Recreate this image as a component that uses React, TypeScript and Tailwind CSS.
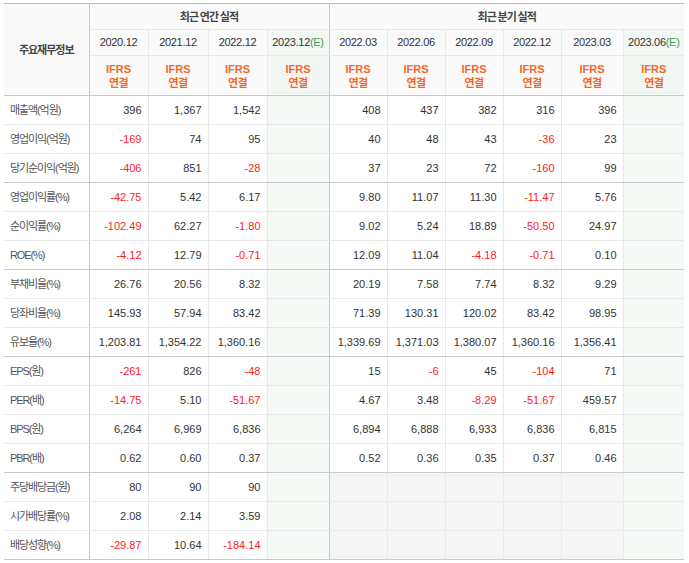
import React from "react";

const KR = "font-['Noto_Sans_CJK_KR','Liberation_Sans',sans-serif]";
const MIX = "font-['Liberation_Sans','Noto_Sans_CJK_KR',sans-serif]";
const NUM = "font-['Liberation_Sans','Noto_Sans_CJK_KR',sans-serif]";

type Row = { label: string; a: string[]; q: string[]; last?: boolean };

const rows: Row[] = [
  { label: "매출액(억원)", a: ["396", "1,367", "1,542"], q: ["408", "437", "382", "316", "396"] },
  { label: "영업이익(억원)", a: ["-169", "74", "95"], q: ["40", "48", "43", "-36", "23"] },
  { label: "당기순이익(억원)", a: ["-406", "851", "-28"], q: ["37", "23", "72", "-160", "99"], last: true },
  { label: "영업이익률(%)", a: ["-42.75", "5.42", "6.17"], q: ["9.80", "11.07", "11.30", "-11.47", "5.76"] },
  { label: "순이익률(%)", a: ["-102.49", "62.27", "-1.80"], q: ["9.02", "5.24", "18.89", "-50.50", "24.97"] },
  { label: "ROE(%)", a: ["-4.12", "12.79", "-0.71"], q: ["12.09", "11.04", "-4.18", "-0.71", "0.10"], last: true },
  { label: "부채비율(%)", a: ["26.76", "20.56", "8.32"], q: ["20.19", "7.58", "7.74", "8.32", "9.29"] },
  { label: "당좌비율(%)", a: ["145.93", "57.94", "83.42"], q: ["71.39", "130.31", "120.02", "83.42", "98.95"] },
  { label: "유보율(%)", a: ["1,203.81", "1,354.22", "1,360.16"], q: ["1,339.69", "1,371.03", "1,380.07", "1,360.16", "1,356.41"], last: true },
  { label: "EPS(원)", a: ["-261", "826", "-48"], q: ["15", "-6", "45", "-104", "71"] },
  { label: "PER(배)", a: ["-14.75", "5.10", "-51.67"], q: ["4.67", "3.48", "-8.29", "-51.67", "459.57"] },
  { label: "BPS(원)", a: ["6,264", "6,969", "6,836"], q: ["6,894", "6,888", "6,933", "6,836", "6,815"] },
  { label: "PBR(배)", a: ["0.62", "0.60", "0.37"], q: ["0.52", "0.36", "0.35", "0.37", "0.46"], last: true },
  { label: "주당배당금(원)", a: ["80", "90", "90"], q: [] },
  { label: "시가배당률(%)", a: ["2.08", "2.14", "3.59"], q: [] },
  { label: "배당성향(%)", a: ["-29.87", "10.64", "-184.14"], q: [], last: true },
];

const annualYears = ["2020.12", "2021.12", "2022.12"];
const quarterYears = ["2022.03", "2022.06", "2022.09", "2022.12", "2023.03"];

function Num({ v }: { v: string }) {
  const neg = v.startsWith("-");
  return <span className={neg ? "text-[#ff1a1a]" : "text-[#333333]"}>{v}</span>;
}

function Ifrs() {
  return (
    <div className="flex flex-col items-center text-[#f0692a] font-bold">
      <div className={`${NUM} text-[11px] leading-[13px]`}>IFRS</div>
      <div className={`${KR} text-[11px] leading-[13px] tracking-[-0.5px]`}>연결</div>
    </div>
  );
}

export default function App() {
  const bDark = "border-[#c9c9c9]";
  return (
    <div className="bg-white w-[689px] h-[563px] pt-[3px] pl-[4px]">
      <table className="border-collapse table-fixed w-[680px]">
        <colgroup>
          <col className="w-[85px]" />
          <col className="w-[59px]" />
          <col className="w-[60px]" />
          <col className="w-[59px]" />
          <col className="w-[62px]" />
          <col className="w-[58px]" />
          <col className="w-[58px]" />
          <col className="w-[58px]" />
          <col className="w-[58px]" />
          <col className="w-[62px]" />
          <col className="w-[61px]" />
        </colgroup>
        <thead>
          <tr className="h-[26px]">
            <th
              rowSpan={3}
              className={`${KR} bg-[#fafafa] border-t border-t-[#bdbdbd] border-r border-b ${bDark} text-[11px] font-bold text-[#444] tracking-[-1px] p-0`}
            >
              주요재무정보
            </th>
            <th
              colSpan={4}
              className={`${KR} bg-[#fafafa] border-t border-t-[#bdbdbd] border-r ${bDark} border-b border-b-[#e8e8e8] text-[11px] font-bold text-[#444] tracking-[-0.9px] p-0`}
            >
              최근 연간 실적
            </th>
            <th
              colSpan={6}
              className={`${KR} bg-[#fafafa] border-t border-t-[#bdbdbd] border-b border-b-[#e8e8e8] text-[11px] font-bold text-[#444] tracking-[-0.9px] p-0`}
            >
              최근 분기 실적
            </th>
          </tr>
          <tr className="h-[26px]">
            {annualYears.map((y) => (
              <th key={y} className={`${MIX} bg-[#fafafa] border-r border-b border-[#e8e8e8] text-[11px] font-normal text-[#333] tracking-[-0.3px] p-0`}>
                {y}
              </th>
            ))}
            <th className={`${MIX} bg-[#f2f7f3] border-r ${bDark} border-b border-b-[#e8e8e8] text-[11px] font-normal text-[#333] tracking-[-0.3px] p-0`}>
              2023.12<span className="text-[#3f9a5a]">(E)</span>
            </th>
            {quarterYears.map((y) => (
              <th key={y} className={`${MIX} bg-[#fafafa] border-r border-b border-[#e8e8e8] text-[11px] font-normal text-[#333] tracking-[-0.3px] p-0`}>
                {y}
              </th>
            ))}
            <th className={`${MIX} bg-[#f2f7f3] border-b border-b-[#e8e8e8] text-[11px] font-normal text-[#333] tracking-[-0.3px] p-0`}>
              2023.06<span className="text-[#3f9a5a]">(E)</span>
            </th>
          </tr>
          <tr className="h-[40px]">
            {[0, 1, 2].map((i) => (
              <th key={i} className={`bg-[#fafafa] border-r border-r-[#e8e8e8] border-b ${bDark} p-0`}>
                <Ifrs />
              </th>
            ))}
            <th className={`bg-[#f2f7f3] border-r border-b ${bDark} p-0`}>
              <Ifrs />
            </th>
            {[0, 1, 2, 3, 4].map((i) => (
              <th key={i} className={`bg-[#fafafa] border-r border-r-[#e8e8e8] border-b ${bDark} p-0`}>
                <Ifrs />
              </th>
            ))}
            <th className={`bg-[#f2f7f3] border-b ${bDark} p-0`}>
              <Ifrs />
            </th>
          </tr>
        </thead>
        <tbody>
          {rows.map((r) => {
            const bb = r.last ? "border-b-[#c9c9c9]" : "border-b-[#e8e8e8]";
            const emptyQ = r.q.length === 0;
            return (
              <tr key={r.label} className="h-[29px]">
                <td className={`${MIX} bg-white border-r border-r-[#c9c9c9] border-b ${bb} text-[11px] text-[#555] tracking-[-1.1px] pl-[6px] p-0 whitespace-nowrap`}>
                  {r.label}
                </td>
                {r.a.map((v, i) => (
                  <td key={i} className={`${NUM} bg-white border-r border-r-[#e8e8e8] border-b ${bb} text-[11px] text-right pr-[6px] p-0`}>
                    <Num v={v} />
                  </td>
                ))}
                <td className={`bg-[#f5faf6] border-r border-r-[#c9c9c9] border-b ${bb} p-0`}></td>
                {[0, 1, 2, 3, 4].map((i) => (
                  <td
                    key={i}
                    className={`${NUM} ${emptyQ ? "bg-[#f5f5f5]" : "bg-white"} border-r border-r-[#e8e8e8] border-b ${bb} text-[11px] text-right pr-[6px] p-0`}
                  >
                    {!emptyQ && <Num v={r.q[i]} />}
                  </td>
                ))}
                <td className={`bg-[#f5faf6] border-b ${bb} p-0`}></td>
              </tr>
            );
          })}
        </tbody>
      </table>
    </div>
  );
}
